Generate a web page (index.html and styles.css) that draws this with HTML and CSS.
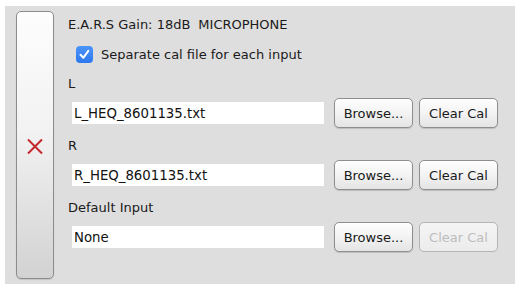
FILE: index.html
```html
<!DOCTYPE html>
<html>
<head>
<meta charset="utf-8">
<link rel="stylesheet" href="styles.css">
</head>
<body>
<div class="panel">
  <div class="side">
    <button class="remove" type="button" aria-label="Remove">
      <svg width="18" height="17" viewBox="0 0 18 17"><path d="M2 1.5 L16 15.5 M16 1.5 L2 15.5" stroke="#c4262c" stroke-width="2" fill="none"/></svg>
    </button>
  </div>
  <div class="content">
    <div class="title">E.A.R.S Gain: 18dB<span class="mode">MICROPHONE</span></div>
    <label class="check">
      <span class="box"><svg width="17" height="17" viewBox="0 0 17 17"><path d="M4.5 8.8 L7.3 11.8 L12.3 4.8" stroke="#fff" stroke-width="2" fill="none" stroke-linecap="round" stroke-linejoin="round"/></svg></span>
      <span>Separate cal file for each input</span>
    </label>
    <div class="block">
      <div class="label">L</div>
      <div class="row">
        <div class="field">L_HEQ_8601135.txt</div>
        <button class="btn" type="button">Browse...</button>
        <button class="btn" type="button">Clear Cal</button>
      </div>
    </div>
    <div class="block">
      <div class="label">R</div>
      <div class="row">
        <div class="field">R_HEQ_8601135.txt</div>
        <button class="btn" type="button">Browse...</button>
        <button class="btn" type="button">Clear Cal</button>
      </div>
    </div>
    <div class="block">
      <div class="label">Default Input</div>
      <div class="row">
        <div class="field">None</div>
        <button class="btn" type="button">Browse...</button>
        <button class="btn disabled" type="button" disabled>Clear Cal</button>
      </div>
    </div>
  </div>
</div>
</body>
</html>
```

FILE: styles.css
```css
html, body {
  margin: 0;
  padding: 0;
  background: #ffffff;
}
body {
  width: 524px;
  height: 293px;
  overflow: hidden;
  font-family: "DejaVu Sans", "Open Sans", sans-serif;
  font-size: 13px;
  color: #1a1a1a;
}
.panel {
  margin: 6px 9px 9px 5px;
  height: 278px;
  background: #dedede;
  display: flex;
  box-sizing: border-box;
  padding: 5px 0 5px 11px;
}
.side {
  display: flex;
}
.remove {
  width: 38px;
  height: 100%;
  margin: 0;
  padding: 0;
  border: 1px solid #8c8c8c;
  border-radius: 5px;
  background: linear-gradient(to bottom, #fdfdfd 0%, #f2f2f2 45%, #d2d2d2 100%);
  display: flex;
  align-items: center;
  justify-content: center;
  box-shadow: 0 1px 1px rgba(0,0,0,0.12);
}
.remove svg {
  display: block;
  margin-top: 2px;
}
.content {
  margin-left: 14px;
  padding-top: 6px;
  display: flex;
  flex-direction: column;
}
.title {
  line-height: 16px;
  height: 16px;
  white-space: nowrap;
}
.mode {
  margin-left: 8px;
}
.check {
  margin-top: 13px;
  margin-left: 8px;
  height: 17px;
  display: flex;
  align-items: center;
  gap: 8px;
  line-height: 16px;
}
.box {
  width: 17px;
  height: 17px;
  border-radius: 4px;
  background: linear-gradient(to bottom, #4a94f8, #2c78ee);
  display: block;
}
.box svg {
  display: block;
}
.block {
  display: flex;
  flex-direction: column;
}
.check + .block {
  margin-top: 13px;
}
.label {
  line-height: 16px;
  height: 16px;
  margin-bottom: 6px;
}
.row {
  height: 30px;
  margin-bottom: 10px;
  display: flex;
  align-items: center;
}
.field {
  margin-left: 4px;
  width: 252px;
  height: 22px;
  box-sizing: border-box;
  background: #ffffff;
  padding-left: 2px;
  line-height: 23px;
  font-size: 13.3px;
  color: #111;
  margin-right: 10px;
}
.btn {
  width: 79px;
  height: 30px;
  margin: 0 6px 0 0;
  padding: 0;
  box-sizing: border-box;
  border: 1px solid #8e8e8e;
  border-radius: 5px;
  background: linear-gradient(to bottom, #fefefe 0%, #f3f3f3 50%, #e4e4e4 100%);
  box-shadow: 0 1px 1px rgba(0,0,0,0.15);
  font-family: "DejaVu Sans", "Open Sans", sans-serif;
  font-size: 13px;
  color: #1a1a1a;
}
.btn.disabled {
  color: #bdbdbd;
  border-color: #b4b4b4;
  background: linear-gradient(to bottom, #f4f4f4 0%, #ececec 100%);
  box-shadow: none;
}
```
